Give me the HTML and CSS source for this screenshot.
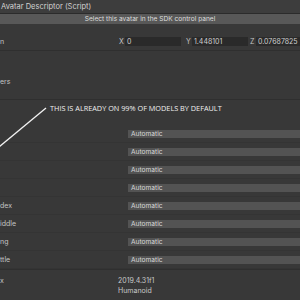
FILE: index.html
```html
<!DOCTYPE html>
<html lang="en">
<head>
    <meta charset="UTF-8">
    <title>Avatar Descriptor</title>
    <link rel="stylesheet" href="styles.css">
</head>
<body>
    <div class="inspector">
        <div class="header">Avatar Descriptor (Script)</div>
        <div class="select-bar">Select this avatar in the SDK control panel</div>

        <div class="vector-row">
            <span class="label">n</span>
            <div class="fields">
                <span class="axis">X</span><span class="field field-x">0</span>
                <span class="axis">Y</span><span class="field field-y">1.448101</span>
                <span class="axis">Z</span><span class="field field-z">0.07687825</span>
            </div>
        </div>

        <div class="section">
            <span class="label">ers</span>
        </div>

        <div class="notes">
            <div class="note">THIS IS ALREADY ON 99% OF MODELS BY DEFAULT</div>
            <svg class="pointer" width="60" height="60" viewBox="0 0 60 60">
                <line x1="46" y1="1" x2="-1" y2="40" stroke="#f2f2f2" stroke-width="1.3"/>
            </svg>
        </div>

        <div class="rows">
            <div class="row"><span class="label"></span><span class="dropdown">Automatic</span></div>
            <div class="row"><span class="label"></span><span class="dropdown">Automatic</span></div>
            <div class="row"><span class="label"></span><span class="dropdown">Automatic</span></div>
            <div class="row"><span class="label"></span><span class="dropdown">Automatic</span></div>
            <div class="row"><span class="label">dex</span><span class="dropdown">Automatic</span></div>
            <div class="row"><span class="label">iddle</span><span class="dropdown">Automatic</span></div>
            <div class="row"><span class="label">ng</span><span class="dropdown">Automatic</span></div>
            <div class="row"><span class="label">ttle</span><span class="dropdown">Automatic</span></div>
        </div>

        <div class="info">
            <div class="info-row"><span class="label">x</span><span class="value">2019.4.31f1</span></div>
            <div class="info-row"><span class="label"></span><span class="value">Humanoid</span></div>
        </div>
    </div>
</body>
</html>
```

FILE: styles.css
```css
body {
    margin: 0;
    background-color: #383838;
    font-family: Inter, 'Noto Sans', sans-serif;
    font-size: 7px;
    color: #c4c4c4;
}
.inspector {
    width: 300px;
    height: 300px;
    overflow: hidden;
    position: relative;
}
.header {
    height: 13px;
    line-height: 13px;
    padding-left: 1px;
    background-color: #3d3d3d;
    border-bottom: 1px solid #2b2b2b;
    font-size: 7.5px;
    color: #d2d2d2;
}
.select-bar {
    height: 10px;
    line-height: 10px;
    background-color: #585858;
    text-align: center;
    font-size: 6.6px;
    color: #dedede;
}
.vector-row {
    display: flex;
    align-items: center;
    height: 9px;
    margin-top: 13px;
    padding-bottom: 4px;
    border-bottom: 1px solid #2f2f2f;
}
.label {
    width: 118px;
    flex-shrink: 0;
}
.fields {
    display: flex;
    align-items: center;
    flex: 1;
}
.axis {
    width: 6px;
    padding-left: 1px;
}
.field {
    height: 9px;
    line-height: 9px;
    background-color: #2a2a2a;
    padding-left: 2px;
    box-sizing: border-box;
    color: #d0d0d0;
}
.field-x { width: 56px; margin-right: 4px; }
.field-y { width: 56px; margin-right: 1px; }
.field-z { width: 47px; }
.section {
    height: 49px;
    display: flex;
    align-items: flex-start;
    padding-top: 26px;
    box-sizing: border-box;
    border-bottom: 1px solid #2f2f2f;
}
.notes {
    height: 25px;
    position: relative;
}
.note {
    position: absolute;
    left: 50px;
    top: 3px;
    font-family: 'Open Sans', sans-serif;
    font-size: 7.3px;
    color: #f0f0f0;
}
.pointer {
    position: absolute;
    left: 0;
    top: 7px;
    overflow: visible;
}
.rows {
    border-bottom: 1px solid #2f2f2f;
}
.row {
    display: flex;
    align-items: center;
    height: 17px;
    border-bottom: 1px solid #343434;
}
.row .label {
    width: 128px;
}
.dropdown {
    flex: 1;
    height: 8px;
    line-height: 8px;
    background-color: #535353;
    padding-left: 3px;
    color: #d8d8d8;
    font-size: 6.6px;
}
.info {
    padding-top: 6px;
}
.info-row {
    display: flex;
    height: 10px;
    line-height: 10px;
}
.value {
    color: #c8c8c8;
}
```
